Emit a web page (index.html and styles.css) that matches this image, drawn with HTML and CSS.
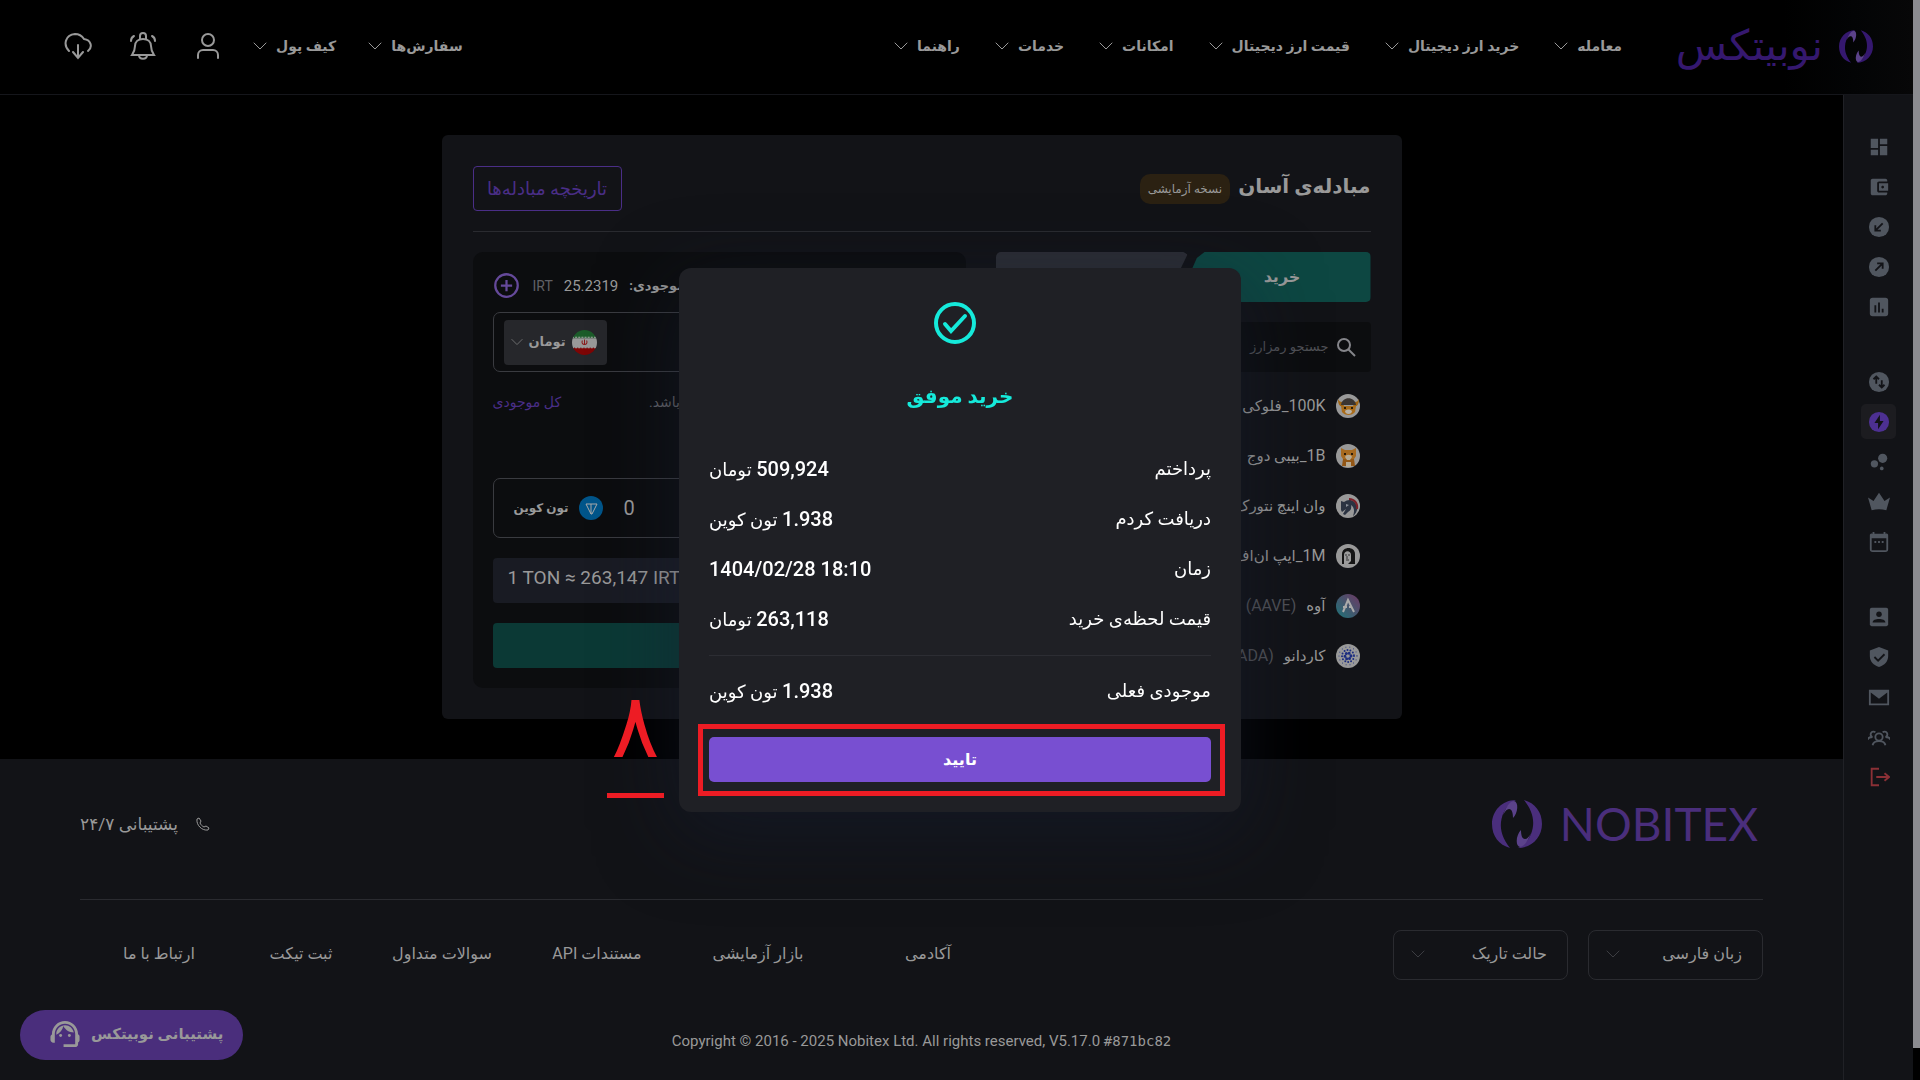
FILE: index.html
```html
<!DOCTYPE html>
<html lang="fa" dir="rtl">

<head>
    <meta charset="UTF-8">
    <meta name="viewport" content="width=device-width, initial-scale=1.0">
    <title>نوبیتکس</title>
    <link rel="stylesheet" href="styles.css">
</head>

<body>
    <svg class="sprite" aria-hidden="true">
        <symbol id="chevron" viewBox="0 0 14 8">
            <path d="M1 1l6 6 6-6" fill="none" stroke="currentColor" stroke-linecap="round" />
        </symbol>
        <symbol id="logo" viewBox="0 0 50 48">
            <path d="M24 0C10 0 0 11 0 24c0 12 7 21 18 24C11 39 8 31 9 22 10 13 15 4 24 0z" fill="currentColor" />
            <path d="M11 15C14 7 18 1 22 1c5 1 4 12-1 17 0-5-1-9-4-9-2 0-4 2-6 6z" fill="#5b428a" />
            <path d="M26 48c14 0 24-11 24-24C50 12 43 3 32 0c7 9 10 17 9 26-1 9-6 18-15 22z" fill="currentColor" />
            <path d="M39 33c-3 8-7 14-11 14-5-1-4-12 1-17 0 5 1 9 4 9 2 0 4-2 6-6z" fill="#5b428a" />
        </symbol>
    </svg>

    <header class="header">
        <a class="brand" href="#">
            <svg class="brand-mark"><use href="#logo" /></svg>
            <span class="brand-name">نوبیتکس</span>
        </a>
        <nav class="nav">
            <a href="#">معامله <svg class="chevron"><use href="#chevron" /></svg></a>
            <a href="#">خرید ارز دیجیتال <svg class="chevron"><use href="#chevron" /></svg></a>
            <a href="#">قیمت ارز دیجیتال <svg class="chevron"><use href="#chevron" /></svg></a>
            <a href="#">امکانات <svg class="chevron"><use href="#chevron" /></svg></a>
            <a href="#">خدمات <svg class="chevron"><use href="#chevron" /></svg></a>
            <a href="#">راهنما <svg class="chevron"><use href="#chevron" /></svg></a>
        </nav>
        <nav class="nav nav-user">
            <a href="#">سفارش‌ها <svg class="chevron"><use href="#chevron" /></svg></a>
            <a href="#">کیف پول <svg class="chevron"><use href="#chevron" /></svg></a>
        </nav>
        <div class="header-icons">
            <button type="button" aria-label="حساب کاربری">
                <svg viewBox="0 0 28 28"><circle cx="14" cy="8" r="6" /><path d="M4 26v-3a5 5 0 0 1 5-5h10a5 5 0 0 1 5 5v3" /></svg>
            </button>
            <button type="button" aria-label="اعلان‌ها">
                <svg viewBox="0 0 28 28"><path d="M3 23c2-3 3-5 3-9 0-4 3-7 8-7s8 3 8 7c0 4 1 6 3 9z" /><path d="M11 7V4a3 3 0 0 1 6 0v3M10 23c0 5 8 5 8 0M2 9c0-2 1-4 3-5M26 9c0-2-1-4-3-5" /></svg>
            </button>
            <button type="button" aria-label="دانلود">
                <svg viewBox="0 0 28 28"><path d="M5 19C-1 13 1 3 11 2c5 0 7 2 9 5 7 1 9 8 4 12M14 13v13M9 20l5 6 5-6" /></svg>
            </button>
        </div>
    </header>

    <div class="layout">
        <aside class="sidebar">
            <div class="side-group">
                <a href="#" aria-label="داشبورد"><svg viewBox="0 0 24 24"><path d="M3 13h8V3H3v10zm0 8h8v-6H3v6zm10 0h8V11h-8v10zm0-18v6h8V3h-8z" /></svg></a>
                <a href="#" aria-label="کیف پول"><svg viewBox="0 0 24 24"><path d="M21 18v1c0 1.100-.9 2-2 2H5c-1.110 0-2-.9-2-2V5c0-1.100.890-2 2-2h14c1.100 0 2 .9 2 2v1h-9c-1.110 0-2 .9-2 2v8c0 1.100.890 2 2 2h9zm-9-2h10V8H12v8zm4-2.500c-.830 0-1.500-.670-1.500-1.500s.670-1.500 1.500-1.500 1.500.670 1.500 1.500-.670 1.500-1.500 1.500z" /></svg></a>
                <a href="#" aria-label="واریز"><svg viewBox="0 0 24 24"><circle cx="12" cy="12" r="11" /><path class="cut" d="M16 8l-8 8M8 10v6h6" /></svg></a>
                <a href="#" aria-label="برداشت"><svg viewBox="0 0 24 24"><circle cx="12" cy="12" r="11" /><path class="cut" d="M8 16l8-8M10 8h6v6" /></svg></a>
                <a href="#" aria-label="بازار"><svg viewBox="0 0 24 24"><path d="M19 2H5a3 3 0 0 0-3 3v14a3 3 0 0 0 3 3h14a3 3 0 0 0 3-3V5a3 3 0 0 0-3-3zM9 18H7v-8h2v8zm4 0h-2V7h2v11zm4 0h-2v-4h2v4z" /></svg></a>
            </div>
            <div class="side-group">
                <a href="#" aria-label="تبدیل"><svg viewBox="0 0 24 24"><circle cx="12" cy="12" r="11" /><path class="cut" d="M9 14V6M6 9l3-3 3 3M15 10v8M12 15l3 3 3-3" /></svg></a>
                <a class="active" href="#" aria-label="مبادله آسان"><svg viewBox="0 0 24 24"><circle cx="12" cy="12" r="11" /><path class="bolt" d="M13 4L7 13h4v7l6-9h-4z" /></svg></a>
                <a href="#" aria-label="استخر"><svg viewBox="0 0 24 24"><circle cx="16" cy="8" r="5" /><circle cx="7" cy="14" r="4" /><circle cx="15" cy="19" r="2" /></svg></a>
                <a href="#" aria-label="ویژه"><svg viewBox="0 0 24 24"><path d="M0 7l6 4 6-9 6 9 6-4-4 14q-8-2-16 0z" /></svg></a>
                <a href="#" aria-label="برنامه"><svg viewBox="0 0 24 24"><path d="M5 1h2v2h10V1h2v2a2 2 0 0 1 3 2v15a3 3 0 0 1-3 3H5a3 3 0 0 1-3-3V5a2 2 0 0 1 3-2zM4 8v13h16V8zM7 11h2v2H7zm4 0h2v2h-2zm4 0h2v2h-2z" fill-rule="evenodd" /></svg></a>
            </div>
            <div class="side-group">
                <a href="#" aria-label="پروفایل"><svg viewBox="0 0 24 24"><path d="M4 2h16a2 2 0 0 1 2 2v16a2 2 0 0 1-2 2H4a2 2 0 0 1-2-2V4a2 2 0 0 1 2-2z" /><circle class="hole" cx="12" cy="9" r="3" /><path class="hole" d="M5 18c0-5 14-5 14 0z" /></svg></a>
                <a href="#" aria-label="امنیت"><svg viewBox="0 0 24 24"><path d="M12 1L2 5v6c0 6 4 10 10 12 6-2 10-6 10-12V5z" /><path class="cut" d="M7 12l4 4 7-7" /></svg></a>
                <a href="#" aria-label="پیام‌ها"><svg viewBox="0 0 24 24"><path d="M1 4h22v17H1zM3 7v12h18V7l-9 7z" fill-rule="evenodd" /></svg></a>
                <a href="#" aria-label="معرفی دوستان"><svg class="line" viewBox="0 0 24 24"><circle cx="12" cy="12" r="4" /><path d="M5 21c1-6 13-6 14 0M5 12a3 3 0 1 1 3-5M19 12a3 3 0 1 0-3-5M0 15c0-2 2-3 5-3M24 15c0-2-2-3-5-3" /></svg></a>
                <a class="logout" href="#" aria-label="خروج"><svg class="line" viewBox="0 0 24 24"><path d="M12 3H4v18h8M9 12h14M18 8l5 4-5 4" /></svg></a>
            </div>
        </aside>

        <div class="page">
            <main class="main">
                <section class="card">
                    <div class="card-head">
                        <h1>مبادله‌ی آسان</h1>
                        <span class="badge">نسخه آزمایشی</span>
                        <button class="history" type="button">تاریخچه مبادله‌ها</button>
                    </div>
                    <div class="card-body">
                        <div class="market">
                            <div class="tabs">
                                <button class="tab buy" type="button">خرید</button>
                                <button class="tab sell" type="button">فروش</button>
                            </div>
                            <label class="search">
                                <svg viewBox="0 0 20 20"><circle cx="8" cy="8" r="6" /><path d="M12 12l7 7" /></svg>
                                <input type="text" placeholder="جستجو رمزارز" aria-label="جستجو رمزارز">
                            </label>
                            <ul class="coins">
                                <li>
                                    <svg viewBox="0 0 25 25"><circle cx="12" cy="12" r="12" fill="#999" /><path d="M2 5c0 7 3 8 6 7l-2-4c-2 0-3-1-4-3zM23 5c0 7-3 8-6 7l2-4c2 0 3-1 4-3z" fill="#a06412" /><path d="M5 11c1-9 14-9 15 0z" fill="#3a3431" /><path d="M5 12h15l-1 6c-3 4-10 4-13 0z" fill="#a96c1b" /><path d="M9 17c2-2 5-2 7 0 0 4-7 4-7 0z" fill="#b8b1a6" /><circle cx="9" cy="14" r="1" /><circle cx="16" cy="14" r="1" /></svg>
                                    <span><bdi>100K</bdi>_فلوکی</span>
                                </li>
                                <li>
                                    <svg viewBox="0 0 25 25"><circle cx="12" cy="12" r="12" fill="#999" /><path d="M5 4l4 2h7l4-2v8l-2 3H7l-2-3z" fill="#a76a20" /><path d="M7 15h11l1 7H6z" fill="#935716" /><path d="M9 13c1-3 6-3 7 0l-2 3h-3zM10 18h5v5h-5z" fill="#b6aa94" /><circle cx="9" cy="10" r="1" /><circle cx="16" cy="10" r="1" /></svg>
                                    <span><bdi>1B</bdi>_بیبی دوج</span>
                                </li>
                                <li>
                                    <svg viewBox="0 0 25 25"><circle cx="12" cy="12" r="12" fill="#999" /><path d="M5 7l3 1c5-4 11-2 13 4 1 4-1 8-4 10 2-5 1-9-2-11 1 4-1 6-3 7l-3 3-2-1 3-5-4 3-1-2z" fill="#2b3342" /><path d="M13 5c6 0 9 5 8 10" fill="none" stroke="#7c2028" stroke-width="2" /><path d="M10 10l3 1-3 2z" fill="#8c929b" /></svg>
                                    <span>وان اینچ نتورک</span>
                                </li>
                                <li>
                                    <svg viewBox="0 0 25 25"><circle cx="12" cy="12" r="12" fill="#999" /><path d="M6 20V10c0-8 13-8 13 0v10z" fill="#151515" /><path d="M8 20V11c0-5 7-5 7 0v6l-3 3z" fill="#9c9c9c" /><path d="M9 11h2m1 0h2m-3 1v3m-1 1h3" stroke="#333" fill="none" /></svg>
                                    <span><bdi>1M</bdi>_ایپ ان‌اف‌تی</span>
                                </li>
                                <li>
                                    <svg viewBox="0 0 25 25"><defs><linearGradient id="aave" x1="0" y1="1" x2="1" y2="0"><stop offset="0" stop-color="#1c7478" /><stop offset="1" stop-color="#6e3763" /></linearGradient></defs><circle cx="12" cy="12" r="12" fill="url(#aave)" /><path d="M7 18l5-12 6 12M7 13h4m2 0h3" stroke="#aaa" stroke-width="2" fill="none" /></svg>
                                    <span>آوه</span> <small dir="ltr">(AAVE)</small>
                                </li>
                                <li>
                                    <svg viewBox="0 0 25 25"><circle cx="12" cy="12" r="12" fill="#999" /><g fill="none" stroke="#1c2d80" stroke-linecap="round"><circle cx="12" cy="12" r="3" stroke-width="3" stroke-dasharray="0 3" /><circle cx="12" cy="12" r="6" stroke-width="2" stroke-dasharray="0 3" /><circle cx="12" cy="12" r="9" stroke-dasharray="0 4" /></g></svg>
                                    <span>کاردانو</span> <small dir="ltr">(ADA)</small>
                                </li>
                            </ul>
                        </div>

                        <form class="trade">
                            <div class="balance">
                                <span class="balance-label">موجودی:</span>
                                <b>25.2319</b>
                                <span class="unit">IRT</span>
                                <button type="button" aria-label="افزایش موجودی">
                                    <svg viewBox="0 0 24 24"><circle cx="12" cy="12" r="10" /><path d="M12 7v10M7 12h10" /></svg>
                                </button>
                            </div>
                            <div class="field pay">
                                <input type="text" aria-label="مبلغ پرداختی">
                                <button class="currency" type="button">
                                    <svg class="flag" viewBox="0 0 24 24"><clipPath id="round"><circle cx="12" cy="12" r="12" /></clipPath><g clip-path="url(#round)"><path d="M0 0h24v8H0z" fill="#1c5c2a" /><path d="M0 8h24v9H0z" fill="#999" /><path d="M0 17h24v7H0z" fill="#7d0505" /><path d="M0 7h24M0 17h24" stroke="#aaa" stroke-dasharray="2 1" /><path d="M10 10c-1 2 0 4 2 4s3-2 2-4M12 9v5" stroke="#8b1a1a" fill="none" /></g></svg>
                                    تومان
                                    <svg class="chevron"><use href="#chevron" /></svg>
                                </button>
                            </div>
                            <div class="hint">
                                <span>مبلغ باید حداقل ۵۰٬۰۰۰ تومان باشد.</span>
                                <a href="#">کل موجودی</a>
                            </div>
                            <div class="field receive">
                                <input type="text" value="0" aria-label="مقدار دریافتی">
                                <svg viewBox="0 0 25 25"><circle cx="12" cy="12" r="12" fill="#00558a" /><path d="M7 8h11l-5 10h-1zM12 8v10" stroke="#aaa" stroke-width="1" fill="none" /></svg>
                                <span>تون کوین</span>
                            </div>
                            <p class="rate" dir="ltr">1 TON ≈ 263,147 IRT</p>
                            <button class="submit" type="button">خرید</button>
                        </form>
                    </div>
                </section>
            </main>

            <footer class="footer">
                <div class="footer-top">
                    <a class="footer-brand" href="#" dir="ltr">
                        <svg><use href="#logo" /></svg>
                        NOBITEX
                    </a>
                    <a class="phone" href="#">
                        <svg viewBox="0 0 14 14"><path d="M1 2l2-1 2 3-1 2c1 2 2 3 4 4l2-1 3 2-1 2C6 14 0 8 1 2z" /></svg>
                        پشتیبانی ۲۴/۷
                    </a>
                </div>
                <div class="footer-row">
                    <div class="pickers">
                        <label class="picker">
                            <select aria-label="زبان"><option>زبان فارسی</option></select>
                            <svg class="chevron"><use href="#chevron" /></svg>
                        </label>
                        <label class="picker">
                            <select aria-label="حالت نمایش"><option>حالت تاریک</option></select>
                            <svg class="chevron"><use href="#chevron" /></svg>
                        </label>
                    </div>
                    <nav class="footer-links">
                        <a href="#">آکادمی</a>
                        <a href="#">بازار آزمایشی</a>
                        <a href="#">مستندات API</a>
                        <a href="#">سوالات متداول</a>
                        <a href="#">ثبت تیکت</a>
                        <a href="#">ارتباط با ما</a>
                    </nav>
                </div>
                <p class="copyright" dir="ltr">Copyright © 2016 - 2025 Nobitex Ltd. All rights reserved, V5.17.0 <code>#871bc82</code></p>
            </footer>
        </div>
    </div>

    <button class="support" type="button">
        پشتیبانی نوبیتکس
        <svg viewBox="1 2 22 20"><path d="M21 12.220C21 6.730 16.740 3 12 3c-4.690 0-9 3.650-9 9.280-.6.340-1 .980-1 1.720v2c0 1.100.9 2 2 2h1v-6.100c0-3.870 3.130-7 7-7s7 3.130 7 7V19h-8v2h8c1.100 0 2-.9 2-2v-1.220c.590-.310 1-.920 1-1.640v-2.300c0-.7-.410-1.310-1-1.620z" /><circle cx="9" cy="13" r="1" /><circle cx="15" cy="13" r="1" /><path d="M18 11.030C17.520 8.180 15.040 6 12.050 6c-3.030 0-6.290 2.510-6.030 6.450 2.470-1.010 4.330-3.210 4.860-5.890 1.310 2.630 4 4.440 7.120 4.470z" /></svg>
    </button>

    <div class="modal-wrap">
        <div class="modal" role="dialog" aria-labelledby="modalTitle">
            <svg class="modal-icon" viewBox="0 0 42 42"><circle cx="21" cy="21" r="19" /><path d="M11 22l6 7 14-15" /></svg>
            <h2 id="modalTitle">خرید موفق</h2>
            <dl class="receipt">
                <div><dt>پرداختم</dt><dd><bdi>509,924</bdi> <span>تومان</span></dd></div>
                <div><dt>دریافت کردم</dt><dd><bdi>1.938</bdi> <span>تون کوین</span></dd></div>
                <div><dt>زمان</dt><dd dir="ltr"><bdi>1404/02/28 18:10</bdi></dd></div>
                <div><dt>قیمت لحظه‌ی خرید</dt><dd><bdi>263,118</bdi> <span>تومان</span></dd></div>
                <div class="total"><dt>موجودی فعلی</dt><dd><bdi>1.938</bdi> <span>تون کوین</span></dd></div>
            </dl>
            <div class="highlight">
                <button class="confirm" type="button">تایید</button>
                <span class="step">۸</span>
            </div>
        </div>
    </div>

    <div class="scrollbar"></div>
</body>

</html>
```
FILE: styles.css
```css
* {
    box-sizing: border-box;
}

body {
    margin: 0;
    min-height: 100vh;
    padding-right: 7px;
    display: flex;
    flex-direction: column;
    background-color: #000;
    color: #999;
    font-family: Roboto, "DejaVu Sans", sans-serif;
    font-size: 14px;
    line-height: 24px;
}

a {
    color: inherit;
    text-decoration: none;
}

button,
input,
select {
    font: inherit;
    color: inherit;
    background: none;
    border: none;
    padding: 0;
    margin: 0;
}

button {
    cursor: pointer;
}

svg {
    flex: none;
    display: block;
}

.sprite {
    position: absolute;
    width: 0;
    height: 0;
}

.chevron {
    width: 14px;
    height: 8px;
}

/* header */
.header {
    height: 95px;
    padding: 0 40px 2px 64px;
    display: flex;
    align-items: center;
    border-bottom: 1px solid #15161b;
    background: linear-gradient(to left, #070708, #030405 60px, #000 130px);
}

.brand {
    display: flex;
    align-items: center;
    gap: 16px;
    color: #35186f;
}

.brand-mark {
    width: 34px;
    height: 33px;
}

.brand-name {
    width: 146px;
    font-size: 42px;
    line-height: 48px;
}

.nav {
    display: flex;
    gap: 35px;
    margin-right: 55px;
    font-size: 14px;
    font-weight: bold;
    white-space: nowrap;
}

.nav a {
    display: flex;
    align-items: center;
    gap: 9px;
}

.nav-user {
    gap: 32px;
    margin-right: auto;
}

.header-icons {
    display: flex;
    gap: 37px;
    margin-right: 31px;
}

.header-icons svg {
    width: 28px;
    height: 28px;
    fill: none;
    stroke: #999;
    stroke-width: 2;
    stroke-linecap: round;
}

/* sidebar */
.layout {
    flex: 1;
    display: flex;
}

.sidebar {
    width: 70px;
    padding-top: 34px;
    display: flex;
    flex-direction: column;
    gap: 40px;
    background-color: #121317;
    border-left: 1px solid #202126;
}

.side-group {
    display: flex;
    flex-direction: column;
    align-items: center;
    gap: 5px;
}

.side-group a {
    width: 35px;
    height: 35px;
    display: flex;
    align-items: center;
    justify-content: center;
    border-radius: 5px;
    color: #50565f;
}

.side-group svg {
    width: 22px;
    height: 22px;
    fill: currentColor;
}

.side-group .cut {
    fill: none;
    stroke: #121317;
    stroke-width: 2;
}

.side-group .hole,
.side-group .bolt {
    fill: #121317;
}

.side-group .line {
    fill: none;
    stroke: currentColor;
    stroke-width: 2;
}

.side-group .active {
    background-color: #1c1c20;
    color: #4d3092;
}

.side-group .logout {
    color: #8b3036;
}

/* exchange card */
.page {
    flex: 1;
    display: flex;
    flex-direction: column;
}

.main {
    padding: 40px;
}

.card {
    max-width: 960px;
    margin: 0 auto;
    padding: 31px;
    border-radius: 6px;
    background-color: #121317;
}

.card-head {
    display: flex;
    align-items: center;
    gap: 8px;
    padding-bottom: 20px;
    border-bottom: 1px solid #2a2b30;
}

h1 {
    margin: 0 0 6px;
    font-size: 20px;
    line-height: 36px;
}

.badge {
    padding: 3px 8px;
    border-radius: 10px;
    background-color: #2b2112;
    font-size: 12px;
    align-self: end;
    margin-bottom: 7px;
}

.history {
    width: 149px;
    height: 45px;
    margin-right: auto;
    border: 1px solid #4a2e87;
    border-radius: 4px;
    color: #4a2e87;
    font-size: 18px;
}

.card-body {
    display: flex;
    gap: 30px;
    padding-top: 20px;
}

.market {
    width: 375px;
}

.tabs {
    display: flex;
}

.tab {
    height: 50px;
    border-radius: 5px;
    font-size: 16px;
    font-weight: bold;
}

.buy {
    width: 193px;
    padding-left: 16px;
    background-color: #0d4742;
    clip-path: polygon(0 100%, 10% 12%, 14% 0, 100% 0, 100% 100%);
}

.sell {
    width: 192px;
    margin-right: -10px;
    background-color: #2b2d34;
    clip-path: polygon(0 0, 98% 0, 100% 5%, 88% 100%, 0 100%);
}

.search {
    height: 50px;
    margin: 20px 0 9px;
    padding: 0 15px;
    display: flex;
    align-items: center;
    gap: 7px;
    border-radius: 4px;
    background-color: #0c0d0f;
    font-size: 13px;
}

.search svg {
    width: 20px;
    height: 20px;
    fill: none;
    stroke: #85858a;
    stroke-width: 2;
}

.search input::placeholder {
    color: #505156;
    opacity: 1;
}

.coins {
    margin: 0;
    padding: 0;
    list-style: none;
    font-size: 15px;
    white-space: nowrap;
}

.coins li {
    height: 50px;
    padding-right: 10px;
    display: flex;
    align-items: center;
    gap: 10px;
}

.coins svg {
    width: 25px;
    height: 25px;
}

.coins bdi {
    font-size: 16px;
}

.coins small {
    font-size: 16px;
    color: #505156;
}

.trade {
    flex: 1;
    padding: 20px;
    border-radius: 10px;
    background-color: #0c0d0f;
}

.balance {
    height: 27px;
    margin-bottom: 13px;
    display: flex;
    align-items: center;
    gap: 11px;
}

.balance-label {
    margin-right: auto;
    font-size: 13px;
    font-weight: bold;
}

.balance b {
    font-size: 15px;
    font-weight: normal;
}

.unit {
    color: #606065;
}

.balance svg {
    margin-right: 2px;
    width: 27px;
    height: 27px;
    fill: none;
    stroke: #65499a;
    stroke-width: 2;
}

.field {
    height: 60px;
    padding: 0 10px;
    display: flex;
    align-items: center;
    border: 1px solid #3a3b40;
    border-radius: 7px;
    font-size: 13px;
    font-weight: bold;
}

.field input {
    flex: 1;
    min-width: 0;
}

.currency {
    height: 45px;
    padding: 0 10px 0 7px;
    display: flex;
    align-items: center;
    gap: 6px;
    border-radius: 4px;
    background-color: #26272b;
}

.flag {
    width: 25px;
    height: 25px;
}

.currency .chevron {
    width: 12px;
    color: #77777a;
}

.hint {
    height: 30px;
    margin: 15px 0 61px;
    display: flex;
    align-items: center;
    gap: 88px;
    white-space: nowrap;
    color: #606166;
    font-size: 14px;
}

.hint span {
    margin-right: auto;
}

.hint a {
    color: #4a2e87;
}

.receive {
    padding: 0 20px;
    gap: 10px;
    font-size: 12px;
}

.receive input {
    font-size: 20px;
    font-weight: normal;
    text-align: left;
}

.receive svg {
    width: 25px;
    height: 25px;
    margin-right: 10px;
}

.rate {
    height: 45px;
    margin: 20px 0;
    padding: 8px 15px;
    border-radius: 4px;
    background-color: #191b23;
    font-size: 19px;
}

.submit {
    width: 100%;
    height: 45px;
    border-radius: 4px;
    background-color: #0b3935;
}

/* footer */
.footer {
    flex: 1;
    padding: 30px 80px 20px;
    background-color: #121317;
}

.footer-top {
    height: 111px;
    padding-bottom: 41px;
    display: flex;
    align-items: center;
    justify-content: space-between;
    border-bottom: 1px solid #2a2b30;
}

.footer-brand {
    display: flex;
    align-items: center;
    gap: 18px;
    padding-right: 5px;
    color: #4a2e7c;
    font-family: Lato, sans-serif;
    font-size: 46px;
    line-height: 48px;
}

.footer-brand svg {
    width: 50px;
    height: 48px;
}

.phone {
    display: flex;
    align-items: center;
    gap: 18px;
    font-size: 17px;
}

.phone svg {
    width: 14px;
    height: 14px;
    fill: none;
    stroke: currentColor;
}

.footer-row {
    display: flex;
    margin-top: 30px;
    font-size: 16px;
}

.pickers {
    display: flex;
    gap: 20px;
}

.picker {
    width: 175px;
    height: 50px;
    padding: 0 20px 2px 17px;
    display: flex;
    align-items: center;
    border: 1px solid #2a2b30;
    border-radius: 8px;
}

.picker select {
    flex: 1;
    appearance: none;
}

.picker .chevron {
    color: #3c3d42;
}

.footer-links {
    flex: 1;
    margin-right: 379px;
    padding-bottom: 2px;
    display: grid;
    grid-template-columns: 172fr 168fr 154fr 156fr 126fr 158fr;
    align-items: center;
    text-align: center;
    white-space: nowrap;
}

.copyright {
    margin: 49px 0 0;
    text-align: center;
    font-size: 15px;
}

.copyright code {
    font-family: "DejaVu Sans Mono", monospace;
    font-size: 14px;
}

.support {
    position: fixed;
    left: 20px;
    bottom: 20px;
    height: 50px;
    padding: 0 20px 2px 29px;
    display: flex;
    align-items: center;
    gap: 10px;
    border-radius: 25px;
    background-color: #4a2e7c;
    font-size: 15px;
    font-weight: bold;
}

.support svg {
    width: 32px;
    height: 30px;
    fill: currentColor;
}

/* result modal */
.modal-wrap {
    position: fixed;
    inset: 0;
    display: flex;
    align-items: center;
    justify-content: center;
}

.modal {
    width: 562px;
    padding: 34px 30px 30px;
    border-radius: 12px;
    background-color: #1f2025;
    box-shadow: 0 20px 80px rgba(21, 30, 50, 0.5);
    color: #fff;
}

.modal-icon {
    width: 42px;
    height: 42px;
    margin: 0 auto;
    position: relative;
    left: -5px;
    fill: none;
    stroke: #15eadb;
    stroke-width: 4;
    stroke-linecap: round;
}

h2 {
    margin: 34px 0 30px;
    color: #15eadb;
    font-size: 20px;
    line-height: 36px;
    text-align: center;
}

.receipt {
    margin: 0;
    font-size: 18px;
    font-weight: 500;
}

.receipt div {
    height: 50px;
    display: flex;
    align-items: center;
    justify-content: space-between;
}

.receipt dd {
    margin: 0;
}

.receipt bdi {
    font-size: 20px;
}

.receipt .total {
    height: 71px;
    margin-top: 11px;
    border-top: 1px solid #2c2d33;
}

.highlight {
    position: relative;
    margin-top: 11px;
}

.highlight::after {
    content: "";
    position: absolute;
    inset: -13px -14px -14px -11px;
    border: 5px solid #ed1c24;
    pointer-events: none;
}

.confirm {
    width: 100%;
    height: 45px;
    display: block;
    border-radius: 5px;
    background-color: #784fd1;
    font-size: 16px;
    font-weight: bold;
}

.step {
    position: absolute;
    right: 547px;
    top: -50px;
    width: 57px;
    padding-bottom: 26px;
    border-bottom: 5px solid #ed1c24;
    color: #ed1c24;
    font-size: 90px;
    line-height: 80px;
    text-align: center;
}

.scrollbar {
    position: fixed;
    top: 0;
    right: 0;
    width: 7px;
    height: 100vh;
    background: linear-gradient(#8b8b90 97%, #000 97%);
}
```
